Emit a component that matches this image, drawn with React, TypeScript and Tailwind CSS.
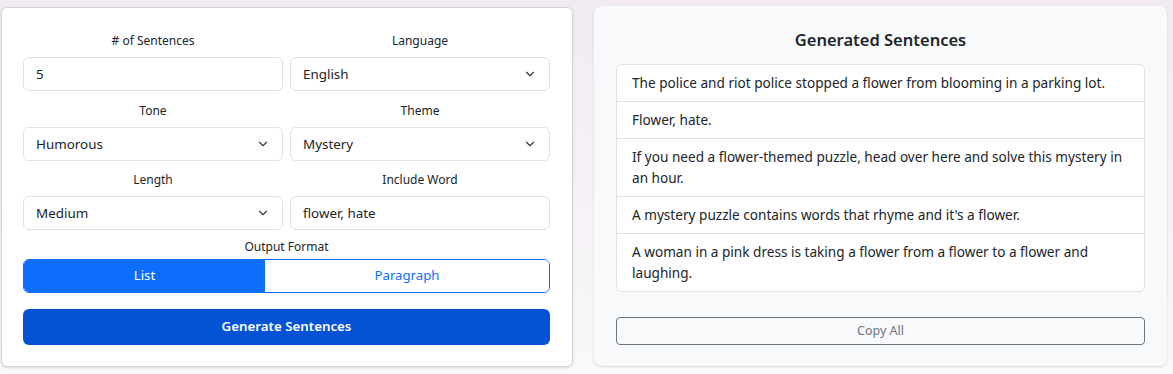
import { ChevronDown } from "lucide-react";

const sentences = [
	"The police and riot police stopped a flower from blooming in a parking lot.",
	"Flower, hate.",
	"If you need a flower-themed puzzle, head over here and solve this mystery in an hour.",
	"A mystery puzzle contains words that rhyme and it's a flower.",
	"A woman in a pink dress is taking a flower from a flower to a flower and laughing.",
];

function Field({ label, children }: { label: string; children: React.ReactNode }) {
	return (
		<div className="flex flex-col">
			<label className="mb-[8px] text-center text-[12px] leading-[16px] text-[#212529]">
				{label}
			</label>
			{children}
		</div>
	);
}

function TextBox({ value }: { value: string }) {
	return (
		<div className="flex h-[34px] items-center rounded-md border border-[#dee2e6] bg-white px-3 text-[13.4px] text-[#212529]">
			{value}
		</div>
	);
}

function SelectBox({ value }: { value: string }) {
	return (
		<div className="flex h-[34px] items-center justify-between rounded-md border border-[#dee2e6] bg-white pl-3 pr-[12px] text-[13.4px] text-[#212529]">
			<span>{value}</span>
			<ChevronDown className="h-[14px] w-[14px] text-[#343a40]" strokeWidth={2} />
		</div>
	);
}

export default function App() {
	return (
		<div
			className="flex h-[374px] w-[1173px] items-start gap-[21px] bg-gradient-to-b from-[#f2eaf3] to-[#f9f8fa] pl-px pt-[6px] text-[#212529]"
			style={{ fontFamily: '"Noto Sans", "Open Sans", sans-serif' }}
		>
			<div className="mt-px h-[360px] w-[572px] rounded-md border border-[#d6d6d9] bg-white pl-[21px] pr-[22px] pt-[25px] shadow-sm">
				<div className="grid grid-cols-2 gap-x-[7px]">
					<Field label="# of Sentences">
						<TextBox value="5" />
					</Field>
					<Field label="Language">
						<SelectBox value="English" />
					</Field>
				</div>
				<div className="mt-[12px] grid grid-cols-2 gap-x-[7px]">
					<Field label="Tone">
						<SelectBox value="Humorous" />
					</Field>
					<Field label="Theme">
						<SelectBox value="Mystery" />
					</Field>
				</div>
				<div className="mt-[11px] grid grid-cols-2 gap-x-[7px]">
					<Field label="Length">
						<SelectBox value="Medium" />
					</Field>
					<Field label="Include Word">
						<TextBox value="flower, hate" />
					</Field>
				</div>
				<div className="mt-[9px] flex flex-col">
					<div className="mb-[4px] text-center text-[12px] leading-[16px]">Output Format</div>
					<div className="flex h-[34px] overflow-hidden rounded-md border border-[#0d6efd] text-[13.2px]">
						<div className="flex w-[241px] items-center justify-center bg-[#0d6efd] text-white">List</div>
						<div className="flex flex-1 items-center justify-center bg-white text-[#0d6efd]">Paragraph</div>
					</div>
				</div>
				<button className="mt-[16px] flex h-[36px] w-full items-center justify-center rounded-md bg-[#0553d4] text-[13.3px] font-semibold text-white">
					Generate Sentences
				</button>
			</div>
			<div className="h-[360px] w-[573px] rounded-lg bg-[#f8f9fa] pl-[22px] pr-[22px] pt-[20px] shadow-sm">
				<h2 className="text-center text-[16.5px] font-semibold leading-[27px] text-[#212529]">
					Generated Sentences
				</h2>
				<ul className="mt-[11px] overflow-hidden rounded-md border border-[#dee2e6] bg-white">
					{sentences.map((s, i) => (
						<li
							key={i}
							className={`px-[15px] pb-[8px] pt-[7px] text-[13.6px] leading-[21px] ${i > 0 ? "border-t border-[#dee2e6]" : ""}`}
						>
							{s}
						</li>
					))}
				</ul>
				<button className="mt-[25px] flex h-[28px] w-full items-center justify-center rounded border border-[#6c757d] text-[12.5px] text-[#6c757d]">
					Copy All
				</button>
			</div>
		</div>
	);
}
